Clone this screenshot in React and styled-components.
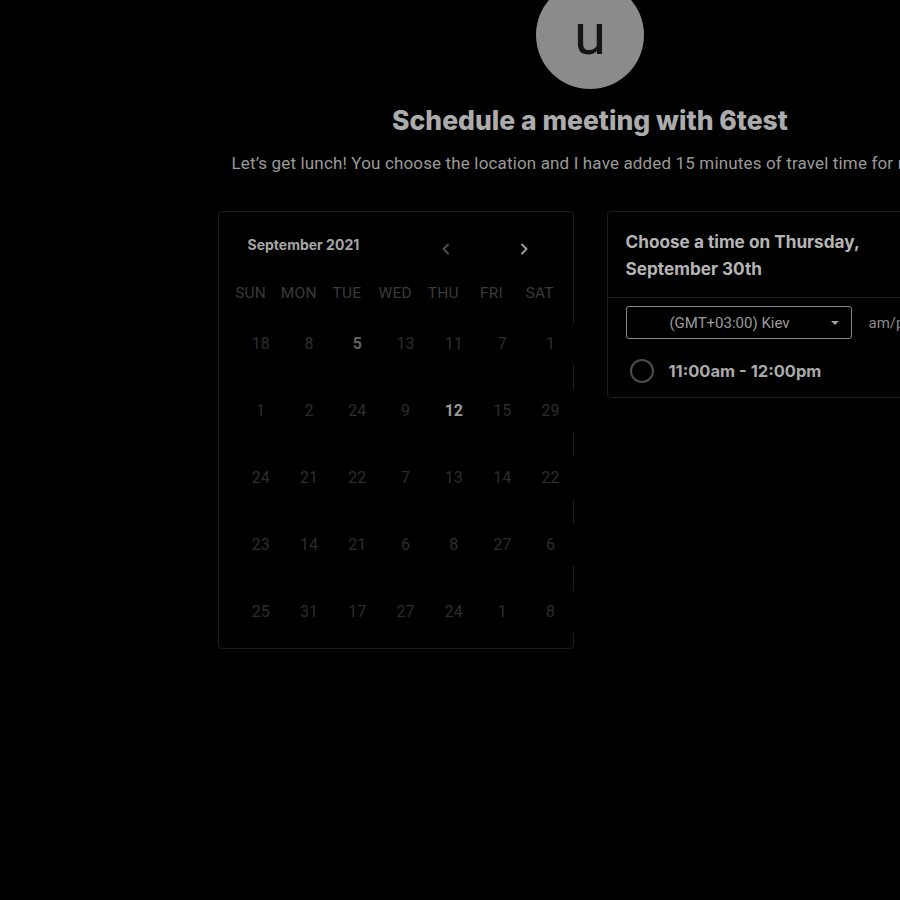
import React from "react";
import styled, { createGlobalStyle } from "styled-components";

const Global = createGlobalStyle`
  html, body {
    margin: 0;
    padding: 0;
    background: #000;
    overflow: hidden;
  }
  body {
    font-family: Roboto, "Liberation Sans", sans-serif;
  }
`;

const Page = styled.div`
  width: 1180px;
  display: flex;
  flex-direction: column;
  align-items: center;
  background: #000;
  min-height: 900px;
`;

const Avatar = styled.div`
  width: 108px;
  height: 108px;
  margin-top: -19px;
  border-radius: 50%;
  background: #8b8b8b;
  color: #151515;
  display: flex;
  align-items: center;
  justify-content: center;
  font-family: Roboto, sans-serif;
  font-size: 58px;
  line-height: 1;
  padding-bottom: 2px;
  box-sizing: border-box;
`;

const Title = styled.h1`
  margin: 16px 0 0;
  font-family: Inter, "Liberation Sans", sans-serif;
  font-weight: 800;
  font-size: 26.5px;
  line-height: 30px;
  color: #acacac;
`;

const Subtitle = styled.p`
  margin: 18px 0 0;
  padding-right: 22px;
  font-family: Roboto, sans-serif;
  font-size: 17px;
  letter-spacing: 0.15px;
  line-height: 20px;
  color: #9a9a9a;
  white-space: nowrap;
`;

const Columns = styled.div`
  display: flex;
  align-items: flex-start;
  gap: 33px;
  margin-top: 38px;
`;

const Card = styled.div`
  width: 356px;
  box-sizing: border-box;
  border: 1px solid #1d1d1d;
  border-radius: 4px;
  background: #000;
`;

const CalendarCard = styled(Card)`
  padding: 0 8px 15px 8px;
`;

const CalHeader = styled.div`
  display: flex;
  align-items: center;
  height: 36px;
  margin-top: 15px;
  padding-left: 21px;
`;

const MonthLabel = styled.div`
  flex: 1;
  font-family: Inter, sans-serif;
  font-weight: 700;
  font-size: 14px;
  color: #a6a6a6;
  margin-top: -2px;
`;

const Arrows = styled.div`
  display: flex;
  gap: 54px;
  margin-right: 29px;
  margin-top: 7px;
`;

const ArrowBtn = styled.div`
  width: 24px;
  height: 24px;
  display: flex;
  align-items: center;
  justify-content: center;
  color: ${(p) => (p.$dim ? "#4f4f4f" : "#9a9a9a")};
`;

const WeekRow = styled.div`
  display: grid;
  grid-template-columns: repeat(7, 48.2px);
  margin-top: 20px;
  height: 20px;
  align-items: center;
`;

const WeekDay = styled.div`
  text-align: center;
  font-family: Roboto, sans-serif;
  font-size: 15.5px;
  color: #3a3a3a;
  letter-spacing: 0.2px;
`;

const DayGrid = styled.div`
  display: grid;
  grid-template-columns: repeat(7, 48.3px);
  grid-auto-rows: 42px;
  row-gap: 25px;
  margin-top: 20px;
  margin-left: 10px;
  width: 338px;
`;

const Day = styled.div`
  background: #000;
  display: flex;
  align-items: center;
  justify-content: center;
  padding-bottom: 2px;
  box-sizing: border-box;
  font-family: Roboto, sans-serif;
  font-size: 16px;
  font-weight: ${(p) => (p.$tone ? 700 : 400)};
  color: ${(p) =>
    p.$tone === "bright" ? "#989898" : p.$tone === "mid" ? "#606060" : "#2d2d2d"};
`;

const TimeCard = styled(Card)``;

const TimeHeader = styled.div`
  padding: 16px 18px 15px;
  border-bottom: 1px solid #1d1d1d;
  font-family: Inter, sans-serif;
  font-weight: 700;
  font-size: 17.2px;
  line-height: 27px;
  color: #b5b5b5;
`;

const TimeBody = styled.div`
  padding: 8px 18px 14px;
`;

const SelectRow = styled.div`
  display: flex;
  align-items: center;
  gap: 17px;
`;

const Select = styled.div`
  width: 226px;
  height: 33px;
  box-sizing: border-box;
  border: 1px solid #8a8a8a;
  border-radius: 3px;
  display: flex;
  align-items: center;
  padding: 0 12px 0 2px;
  font-family: Roboto, sans-serif;
  font-size: 15px;
  color: #9b9b9b;
`;

const SelectText = styled.span`
  flex: 1;
  text-align: center;
`;

const Caret = styled.span`
  width: 0;
  height: 0;
  border-left: 4px solid transparent;
  border-right: 4px solid transparent;
  border-top: 4px solid #a0a0a0;
`;

const Format = styled.span`
  font-family: Roboto, sans-serif;
  font-size: 15px;
  color: #8a8a8a;
  white-space: nowrap;
`;

const SlotRow = styled.div`
  display: flex;
  align-items: center;
  gap: 15px;
  margin-top: 20px;
  padding-left: 4px;
`;

const Radio = styled.div`
  width: 24px;
  height: 24px;
  box-sizing: border-box;
  border-radius: 50%;
  border: 2px solid #4d4d4d;
`;

const SlotText = styled.span`
  font-family: Inter, sans-serif;
  font-weight: 700;
  font-size: 16.5px;
  color: #aaaaaa;
`;

const weekDays = ["SUN", "MON", "TUE", "WED", "THU", "FRI", "SAT"];
const days = [
  [18, 8, 5, 13, 11, 7, 1],
  [1, 2, 24, 9, 12, 15, 29],
  [24, 21, 22, 7, 13, 14, 22],
  [23, 14, 21, 6, 8, 27, 6],
  [25, 31, 17, 27, 24, 1, 8],
];
const tones = { "0-2": "mid", "1-4": "bright" };

const Chevron = ({ dir }) => (
  <svg width="14" height="14" viewBox="0 0 14 14" fill="none">
    <path
      d={dir === "left" ? "M9 2.5 L4.5 7 L9 11.5" : "M5 2.5 L9.5 7 L5 11.5"}
      stroke="currentColor"
      strokeWidth="2"
      strokeLinecap="round"
      strokeLinejoin="round"
    />
  </svg>
);

export default function App() {
  return (
    <>
      <Global />
      <Page>
        <Avatar>u</Avatar>
        <Title>Schedule a meeting with 6test</Title>
        <Subtitle>
          Let’s get lunch! You choose the location and I have added 15 minutes of travel time for me.
        </Subtitle>
        <Columns>
          <CalendarCard>
            <CalHeader>
              <MonthLabel>September 2021</MonthLabel>
              <Arrows>
                <ArrowBtn $dim>
                  <Chevron dir="left" />
                </ArrowBtn>
                <ArrowBtn>
                  <Chevron dir="right" />
                </ArrowBtn>
              </Arrows>
            </CalHeader>
            <WeekRow>
              {weekDays.map((d) => (
                <WeekDay key={d}>{d}</WeekDay>
              ))}
            </WeekRow>
            <DayGrid>
              {days.map((row, r) =>
                row.map((d, c) => (
                  <Day key={`${r}-${c}`} $tone={tones[`${r}-${c}`]}>
                    {d}
                  </Day>
                ))
              )}
            </DayGrid>
          </CalendarCard>
          <TimeCard>
            <TimeHeader>
              Choose a time on Thursday,
              <br />
              September 30th
            </TimeHeader>
            <TimeBody>
              <SelectRow>
                <Select>
                  <SelectText>(GMT+03:00) Kiev</SelectText>
                  <Caret />
                </Select>
                <Format>am/pm</Format>
              </SelectRow>
              <SlotRow>
                <Radio />
                <SlotText>11:00am - 12:00pm</SlotText>
              </SlotRow>
            </TimeBody>
          </TimeCard>
        </Columns>
      </Page>
    </>
  );
}
